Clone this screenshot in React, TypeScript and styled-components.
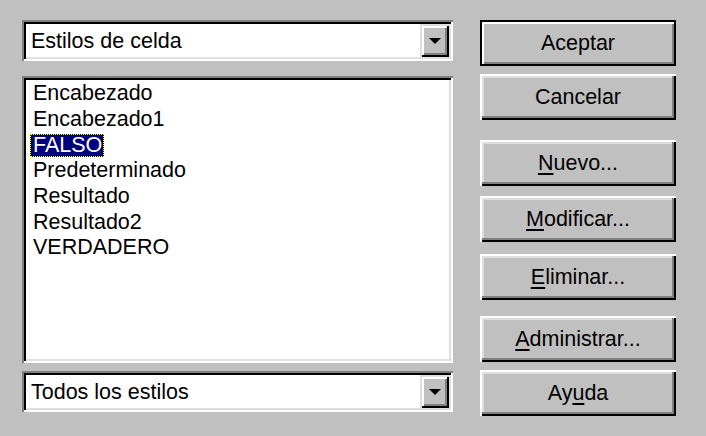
import { FC, ReactNode, useState } from "react";
import styled, { createGlobalStyle, css } from "styled-components";

const GlobalStyle = createGlobalStyle`
  html, body {
    margin: 0;
    padding: 0;
    background: #c0c0c0;
  }
  body {
    font-family: "Liberation Sans", Arial, sans-serif;
    font-size: 21.5px;
    color: #000;
  }
`;

const styles = [
  "Encabezado",
  "Encabezado1",
  "FALSO",
  "Predeterminado",
  "Resultado",
  "Resultado2",
  "VERDADERO",
];

type ButtonDef = { label: ReactNode; top: number; isDefault?: boolean };

const buttons: ButtonDef[] = [
  { label: "Aceptar", top: 0, isDefault: true },
  { label: "Cancelar", top: 8 },
  { label: <><u>N</u>uevo...</>, top: 20 },
  { label: <><u>M</u>odificar...</>, top: 10 },
  { label: <><u>E</u>liminar...</>, top: 12 },
  { label: <><u>A</u>dministrar...</>, top: 16 },
  { label: <>Ay<u>u</u>da</>, top: 8 },
];

const ComboBox: FC<{ value: string }> = ({ value }) => (
  <StCombo>
    <StComboText>{value}</StComboText>
    <StArrowButton>
      <StArrow />
    </StArrowButton>
  </StCombo>
);

export default function App() {
  const [selected, setSelected] = useState<number>(2);

  return (
    <>
      <GlobalStyle />
      <StDialog>
        <StLeft>
          <ComboBox value="Estilos de celda" />
          <StList>
            {styles.map((name, i) => (
              <StItem key={name} onClick={() => setSelected(i)}>
                <StItemText $selected={i === selected}>{name}</StItemText>
              </StItem>
            ))}
          </StList>
          <ComboBox value="Todos los estilos" />
        </StLeft>
        <StRight>
          {buttons.map((b, i) => (
            <StButton key={i} $top={b.top} $default={b.isDefault}>
              {b.label}
            </StButton>
          ))}
        </StRight>
      </StDialog>
    </>
  );
}

const sunken = css`
  box-shadow:
    inset 2px 2px 0 #808080,
    inset -2px -2px 0 #ffffff,
    inset 4px 4px 0 #000000,
    inset -4px -4px 0 #dfdfdf;
`;

const StDialog = styled.div`
  width: 706px;
  height: 436px;
  box-sizing: border-box;
  padding: 20px 30px 0 22px;
  display: flex;
  gap: 27px;
`;

const StLeft = styled.div`
  width: 431px;
  display: flex;
  flex-direction: column;
`;

const StRight = styled.div`
  width: 196px;
  display: flex;
  flex-direction: column;
`;

const StCombo = styled.div`
  height: 41px;
  box-sizing: border-box;
  padding: 4px;
  background: #fff;
  display: flex;
  align-items: stretch;
  ${sunken}
`;

const StComboText = styled.div`
  flex: 1;
  display: flex;
  align-items: center;
  padding-left: 5px;
  padding-top: 1px;
`;

const StArrowButton = styled.div`
  width: 29px;
  background: #c0c0c0;
  display: flex;
  align-items: center;
  justify-content: center;
  box-shadow:
    inset 2px 2px 0 #dfdfdf,
    inset -2px -2px 0 #000000,
    inset 4px 4px 0 #ffffff,
    inset -4px -4px 0 #808080;
`;

const StArrow = styled.div`
  width: 0;
  height: 0;
  border-left: 6px solid transparent;
  border-right: 6px solid transparent;
  border-top: 6px solid #000;
  margin-top: 1px;
`;

const StList = styled.div`
  height: 287px;
  margin: 15px 0 8px;
  box-sizing: border-box;
  padding: 5px 4px 4px 8px;
  background: #fff;
  ${sunken}
`;

const StItem = styled.div`
  height: 25.7px;
  display: flex;
  align-items: center;
`;

const StItemText = styled.span<{ $selected?: boolean }>`
  padding: 0 2px 0 3px;
  line-height: 23px;
  ${({ $selected }) =>
    $selected &&
    css`
      background: #000080;
      color: #fff;
      outline: 1px dotted #ffff00;
      outline-offset: -1px;
    `}
`;

const StButton = styled.div<{ $top: number; $default?: boolean }>`
  height: 46px;
  margin-top: ${({ $top }) => $top}px;
  box-sizing: border-box;
  display: flex;
  align-items: center;
  justify-content: center;
  background: #c0c0c0;
  u {
    text-decoration-thickness: 2px;
    text-underline-offset: 3px;
  }
  ${({ $default }) =>
    $default
      ? css`
          box-shadow:
            inset 0 0 0 2px #000000,
            inset 4px 4px 0 #ffffff,
            inset -4px -4px 0 #808080;
        `
      : css`
          box-shadow:
            inset 2px 2px 0 #ffffff,
            inset -2px -2px 0 #000000,
            inset -4px -4px 0 #808080,
            inset 4px 4px 0 #dfdfdf;
        `}
`;
